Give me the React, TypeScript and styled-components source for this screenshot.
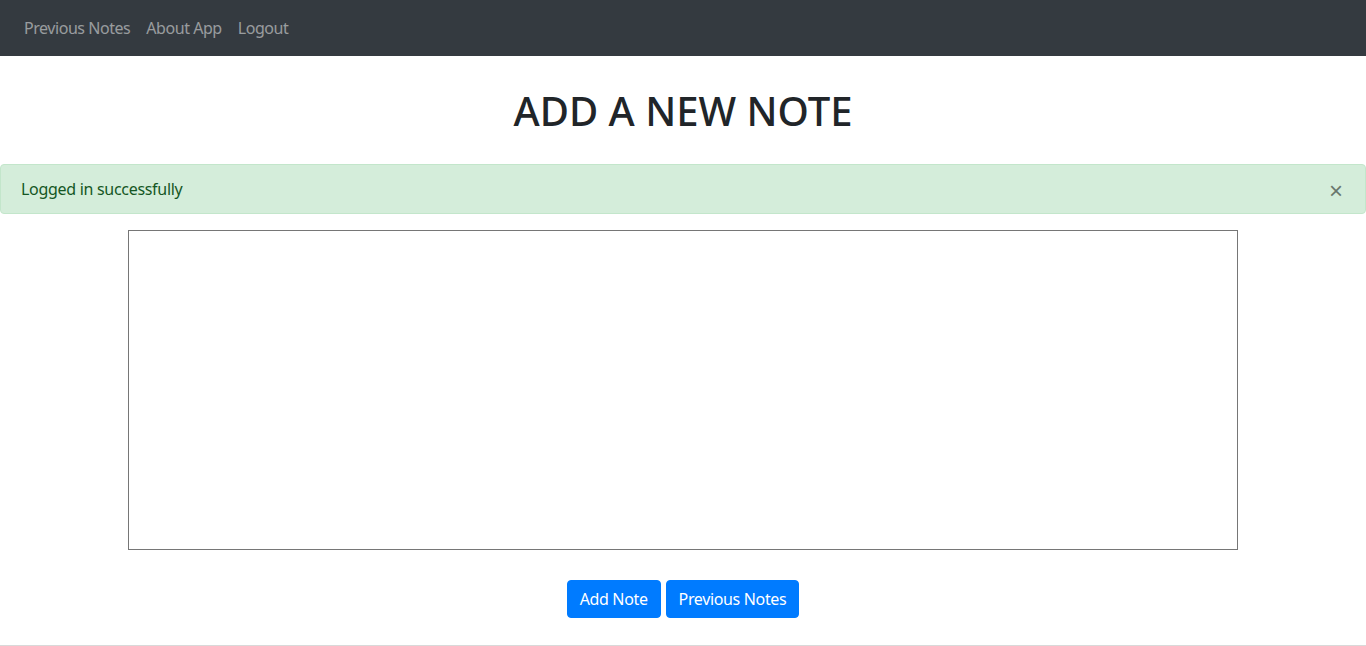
import React from "react";
import styled, { createGlobalStyle } from "styled-components";

const Global = createGlobalStyle`
  html, body { margin: 0; padding: 0; background: #fff; }
  body {
    font-family: "Noto Sans", "Open Sans", "Liberation Sans", sans-serif;
    font-size: 16px;
    color: #212529;
  }
  * { box-sizing: border-box; }
`;

const Navbar = styled.nav`
  height: 56px;
  background: #343a40;
  display: flex;
  align-items: center;
  padding: 0 16px;
`;

const NavLink = styled.a`
  color: rgba(255, 255, 255, 0.5);
  text-decoration: none;
  font-size: 16px;
  padding: 8px 8px;
  line-height: 24px;
  letter-spacing: -0.45px;
  cursor: pointer;
`;

const Heading = styled.h1`
  margin: 31px 0 29px;
  text-align: center;
  font-size: 40px;
  font-weight: 500;
  line-height: 48px;
  color: #212529;
`;

const Alert = styled.div`
  position: relative;
  background: #d4edda;
  border: 1px solid #c3e6cb;
  color: #155724;
  border-radius: 4px;
  padding: 12px 20px;
  line-height: 24px;
  font-size: 16px;
  letter-spacing: -0.3px;
  margin-bottom: 16px;
`;

const Close = styled.button`
  position: absolute;
  top: 0;
  right: 0;
  height: 100%;
  padding: 3px 22px 0;
  border: 0;
  background: transparent;
  color: #000;
  opacity: 0.5;
  font-size: 24px;
  font-weight: 400;
  line-height: 1;
  font-family: "Liberation Sans", sans-serif;
  cursor: pointer;
`;

const Form = styled.form`
  display: flex;
  flex-direction: column;
  align-items: center;
`;

const TextArea = styled.textarea`
  display: block;
  width: 1110px;
  height: 320px;
  border: 1px solid #767676;
  border-radius: 0;
  resize: none;
  padding: 2px;
  font-family: inherit;
`;

const Actions = styled.div`
  display: flex;
  gap: 5px;
  margin-top: 30px;
`;

const Button = styled.button`
  background: #007bff;
  color: #fff;
  border: 1px solid #007bff;
  border-radius: 4px;
  height: 38px;
  padding: 0 12px;
  font-size: 16px;
  line-height: 24px;
  letter-spacing: -0.35px;
  font-family: inherit;
  cursor: pointer;
`;

const Rule = styled.hr`
  margin: 27px 0 0;
  border: 0;
  border-top: 1px solid #d9d9d9;
`;

export default function App() {
  return (
    <>
      <Global />
      <Navbar>
        <NavLink>Previous Notes</NavLink>
        <NavLink>About App</NavLink>
        <NavLink>Logout</NavLink>
      </Navbar>
      <Heading>ADD A NEW NOTE</Heading>
      <Alert>
        Logged in successfully
        <Close aria-label="Close">×</Close>
      </Alert>
      <Form onSubmit={(e) => e.preventDefault()}>
        <TextArea />
        <Actions>
          <Button type="submit">Add Note</Button>
          <Button type="button">Previous Notes</Button>
        </Actions>
      </Form>
      <Rule />
    </>
  );
}
